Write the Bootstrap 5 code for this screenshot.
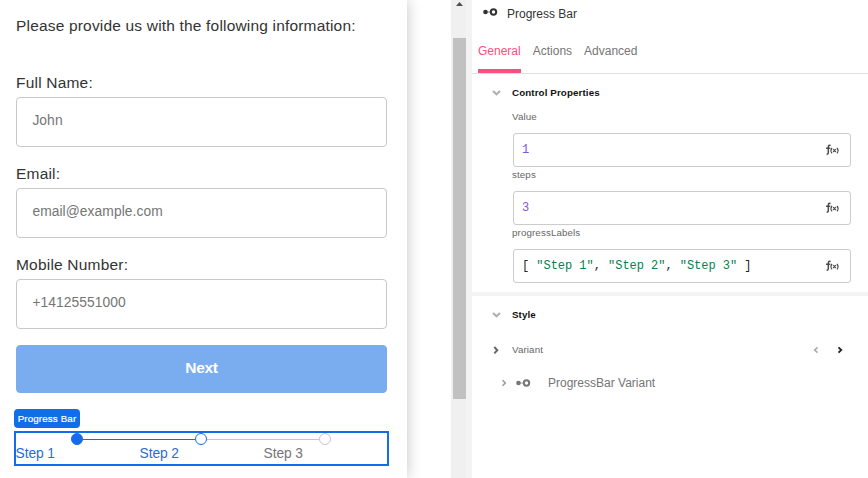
<!DOCTYPE html>
<html lang="en">
<head>
<meta charset="utf-8">
<meta name="viewport" content="width=device-width, initial-scale=1">
<title>Progress Bar</title>
<link href="https://cdn.jsdelivr.net/npm/bootstrap@5.3.0/dist/css/bootstrap.min.css" rel="stylesheet">
<style>
body{font-family:"Liberation Sans",Arial,sans-serif;background:#fff;color:#333;height:478px;overflow:hidden}
svg{display:block;flex-shrink:0}
.preview{width:407px;padding:0 20px 0 16px;box-shadow:0 0 14px rgba(0,0,0,.24)}
.canvas-gap{width:44px}
.intro{font-size:15.5px;line-height:20px;padding-top:16px;margin-bottom:37px;letter-spacing:.18px;white-space:nowrap}
.form-label{font-size:15.5px;line-height:20px;margin-bottom:4px;letter-spacing:.2px;display:block}
.form-field{margin-bottom:17px}
.form-field .form-control{height:50px;padding:0 15.4px 4px;border-color:#c8c8c8;border-radius:4px;font-size:13.8px;letter-spacing:.08px}
.form-control::placeholder{color:#757575;opacity:1}
.btn-next{--bs-btn-bg:#7aacf0;--bs-btn-border-color:#7aacf0;--bs-btn-color:#fff;height:48px;margin-top:-1px;font-size:15.5px;font-weight:700;border-radius:4px;padding:0 0 2px;letter-spacing:-.3px}
.tag{align-self:flex-start;margin:16px 0 3px -2px;width:66px;height:19px;line-height:19px;font-size:9.75px;letter-spacing:.15px;border-radius:4px;background:#136de9;color:#fff;text-align:center;white-space:nowrap;-webkit-text-stroke:.2px #fff}
.selection{border:2px solid #136de9;height:35px;margin:0 -2px}
.steps{margin-left:-1px}
.step{flex:1 1 0;color:#2a6bd4;font-size:13.8px;letter-spacing:-.1px;line-height:17px}
.step-text{display:block;padding-left:.6px}
.step.todo{color:#757575}
.track{height:12px}
.track i{height:1px;flex:1 1 0}
.track i.on{background:#136de9}
.track i.off{background:#c8c8c8}
.dot{width:12px;height:12px;border:1px solid #136de9;border-radius:50%}
.dot.full{background:#136de9}
.dot.off{border-color:#c8c8c8}
.scroller{width:15px;background:#f0f0f0}
.scroller .thumb{width:13px;height:361px;background:#c1c1c1;margin:31px 0 0 2px}
.divider-v{width:6px;background:#f3f3f3}
.panel-title{height:38px;padding:5px 0 0 11px;font-size:12px;color:#333;gap:9px}
.panel-title svg{margin-top:3px}
.tabs{height:36px;padding-left:6px;gap:12px;border-bottom:1px solid #e0e0e0;font-size:12px}
.tabs .nav-link{padding:4px 0 0;line-height:18px;color:#757575;height:35px;border-radius:0}
.tabs .nav-link.active{color:#ff4d80;border-bottom:4px solid #ff4d80}
.section-head{font-size:9.75px;letter-spacing:.12px;font-weight:700;color:#111;line-height:14px;margin-top:12px}
.chev{width:40px;padding-left:20px}
.chev-side{padding-left:21px}
.prop{padding:0 17px 0 41px}
.prop-label{font-size:9.75px;letter-spacing:.12px;line-height:14px;color:#666}
.prop .prop-label{margin-left:-1px;padding-top:1px}
.prop .prop-label:first-child{padding-top:10px}
.code-field{height:34px;border:1px solid #ccc;border-radius:3px;padding:0 10px 0 8px;margin-top:9px;font:12px "Liberation Mono",monospace;letter-spacing:-.03px}
.num{color:#8053dc}.str{color:#07804e}
.fx{color:#4d4d4d}
.rule{height:4px;background:#f3f3f3;margin-top:9px}
.variant-label{margin-top:21px}
.pager{gap:18px;padding-right:25px}
.variant-row{margin-top:17px;padding-left:29px;font-size:12px;line-height:18px;color:#757575;gap:9px}
.variant-row span{margin-left:8px}
</style>
</head>
<body>
<svg width="0" height="0" class="position-absolute" aria-hidden="true">
<symbol id="pb" viewBox="0 0 15 8"><circle cx="2.5" cy="4" r="2.3" fill="currentColor"/><path d="M4 4h4" stroke="currentColor" stroke-width=".9" opacity=".7"/><circle cx="10.5" cy="4" r="2.7" fill="#fff" stroke="currentColor" stroke-width="2"/></symbol>
<symbol id="fx" viewBox="0 0 15 12"><g fill="none" stroke="currentColor"><path d="M5.6 1.5C4.2 1 3.4 1.5 3.3 3v5.6c0 1.2-.5 1.6-1.7 1.3M1 4.3h4.3" stroke-width="1.5"/><path d="M7 3.9c-1.2 1.5-1.2 3.9 0 5.4M12 3.9c1.2 1.5 1.2 3.9 0 5.4M8.1 5.2l2.8 2.8M10.9 5.2L8.1 8" stroke-width="1.2"/></g></symbol>
</svg>
<div class="d-flex h-100">
  <main class="preview d-flex flex-column position-relative flex-shrink-0">
    <p class="intro">Please provide us with the following information:</p>
    <div class="form-field"><label class="form-label" for="name">Full Name:</label><input id="name" class="form-control" placeholder="John"></div>
    <div class="form-field"><label class="form-label" for="email">Email:</label><input id="email" class="form-control" placeholder="email@example.com"></div>
    <div class="form-field"><label class="form-label" for="tel">Mobile Number:</label><input id="tel" class="form-control" placeholder="+14125551000"></div>
    <button class="btn btn-next w-100" type="button">Next</button>
    <span class="tag">Progress Bar</span>
    <div class="selection">
      <div class="steps d-flex">
        <div class="step"><div class="track d-flex align-items-center"><i></i><span class="dot full"></span><i class="on"></i></div><span class="step-text">Step 1</span></div>
        <div class="step"><div class="track d-flex align-items-center"><i class="on"></i><span class="dot"></span><i class="off"></i></div><span class="step-text">Step 2</span></div>
        <div class="step todo"><div class="track d-flex align-items-center"><i class="off"></i><span class="dot off"></span><i></i></div><span class="step-text">Step 3</span></div>
      </div>
    </div>
  </main>
  <div class="canvas-gap flex-shrink-0"></div>
  <div class="scroller flex-shrink-0">
    <svg width="15" height="7" viewBox="0 0 15 7"><path d="M5 6l3.5-4L12 6z" fill="#505050"/></svg>
    <div class="thumb"></div>
  </div>
  <div class="divider-v flex-shrink-0"></div>
  <aside class="flex-grow-1">
    <div class="panel-title d-flex"><svg width="15" height="8"><use href="#pb"/></svg><span>Progress Bar</span></div>
    <nav class="tabs nav flex-nowrap"><a class="nav-link active" href="#">General</a><a class="nav-link" href="#">Actions</a><a class="nav-link" href="#">Advanced</a></nav>
    <section>
      <div class="d-flex align-items-center section-head"><span class="chev"><svg width="9" height="7" viewBox="0 0 9 7"><path d="M1 1l3.5 3.2L8 1" fill="none" stroke="#b0b0b0" stroke-width="2.2"/></svg></span>Control Properties</div>
      <div class="prop">
        <div class="prop-label">Value</div>
        <div class="code-field d-flex align-items-center justify-content-between"><span class="num">1</span><svg class="fx" width="15" height="12"><use href="#fx"/></svg></div>
        <div class="prop-label">steps</div>
        <div class="code-field d-flex align-items-center justify-content-between"><span class="num">3</span><svg class="fx" width="15" height="12"><use href="#fx"/></svg></div>
        <div class="prop-label">progressLabels</div>
        <div class="code-field d-flex align-items-center justify-content-between"><span class="text-dark">[ <span class="str">"Step 1"</span>, <span class="str">"Step 2"</span>, <span class="str">"Step 3"</span> ]</span><svg class="fx" width="15" height="12"><use href="#fx"/></svg></div>
      </div>
    </section>
    <div class="rule"></div>
    <section>
      <div class="d-flex align-items-center section-head"><span class="chev"><svg width="9" height="7" viewBox="0 0 9 7"><path d="M1 1l3.5 3.2L8 1" fill="none" stroke="#b0b0b0" stroke-width="2.2"/></svg></span>Style</div>
      <div class="d-flex align-items-center prop-label variant-label"><span class="chev chev-side"><svg width="7" height="9" viewBox="0 0 7 9"><path d="M1.3 1l3 3.2-3 3.2" fill="none" stroke="#666" stroke-width="2"/></svg></span>Variant
        <span class="pager d-flex ms-auto"><svg width="6" height="8" viewBox="0 0 6 8"><path d="M4.5 1.3L1.7 4l2.8 2.7" fill="none" stroke="#aaa" stroke-width="1.6"/></svg><svg width="6" height="8" viewBox="0 0 6 8"><path d="M1.5 1.3L4.3 4 1.5 6.7" fill="none" stroke="#222" stroke-width="1.8"/></svg></span></div>
      <div class="d-flex align-items-center variant-row"><svg width="6" height="8" viewBox="0 0 6 8"><path d="M1.5 1.3L4.3 4 1.5 6.7" fill="none" stroke="#999" stroke-width="1.5"/></svg><svg width="15" height="8"><use href="#pb"/></svg><span>ProgressBar Variant</span></div>
    </section>
  </aside>
</div>
<script src="https://cdn.jsdelivr.net/npm/bootstrap@5.3.0/dist/js/bootstrap.bundle.min.js"></script>
</body>
</html>
